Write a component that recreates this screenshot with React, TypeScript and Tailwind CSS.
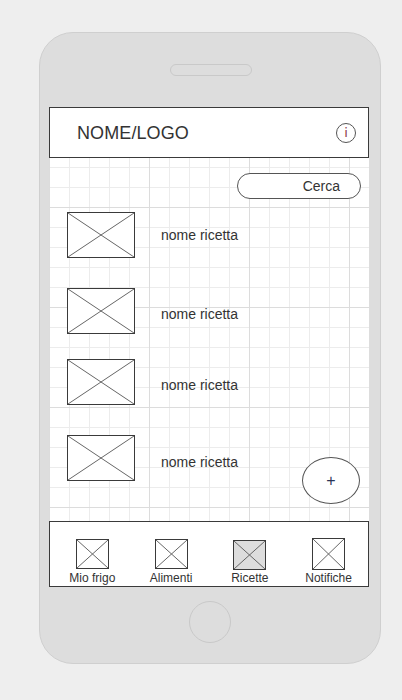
import React from 'react';

const recipes = [
  { id: 1, name: 'nome ricetta', gap: 'mt-[13px]', pad: 'pt-0' },
  { id: 2, name: 'nome ricetta', gap: 'mt-[30px]', pad: 'pt-[7px]' },
  { id: 3, name: 'nome ricetta', gap: 'mt-[25px]', pad: 'pt-[6px]' },
  { id: 4, name: 'nome ricetta', gap: 'mt-[30px]', pad: 'pt-[8px]' },
];

const tabs = [
  { id: 'frigo', label: 'Mio frigo', active: false, big: false },
  { id: 'alimenti', label: 'Alimenti', active: false, big: false },
  { id: 'ricette', label: 'Ricette', active: true, big: false },
  { id: 'notifiche', label: 'Notifiche', active: false, big: true },
];

// placeholder box with a cross, like in wireframes
const Placeholder: React.FC<{ className?: string; fill?: string }> = ({ className, fill }) => (
  <div className={`border border-[#3a3a3a] ${className ?? ''}`} style={fill ? { backgroundColor: fill } : undefined}>
    <svg className="w-full h-full block" viewBox="0 0 100 100" preserveAspectRatio="none">
      <line x1="0" y1="0" x2="100" y2="100" stroke="#666" strokeWidth="1" vectorEffect="non-scaling-stroke" />
      <line x1="100" y1="0" x2="0" y2="100" stroke="#666" strokeWidth="1" vectorEffect="non-scaling-stroke" />
    </svg>
  </div>
);

const App: React.FC = () => {
  return (
    <div className="min-h-[700px] w-[402px] bg-[#eeeeee] pt-[32px] font-['Liberation_Sans',Arial,sans-serif] text-[#333]">
      {/* Phone body */}
      <div className="ml-[39px] w-[342px] h-[632px] rounded-[34px] border border-[#cfcfcf] bg-[#dddddd] flex flex-col">
        {/* Speaker */}
        <div className="mt-[31px] ml-[130px] w-[82px] h-[12px] rounded-full border border-[#c9c9c9] bg-[#dddddd]" />

        {/* Screen */}
        <div className="mt-[31px] ml-[9px] w-[320px] flex flex-col">
          {/* Header */}
          <div className="h-[51px] border border-[#3a3a3a] bg-white flex items-center justify-between pl-[27px] pr-[12px]">
            <span className="text-[18px] text-[#333] tracking-[0.1px] pt-[2px]">NOME/LOGO</span>
            <div className="w-[20px] h-[20px] rounded-full border border-[#555] flex items-center justify-center">
              <span className="text-[13px] leading-none text-[#8b3a4a] font-['DejaVu_Sans',sans-serif]">i</span>
            </div>
          </div>

          {/* Content */}
          <div className="relative h-[363px] bg-white bg-[linear-gradient(to_right,#dcdcdc_1px,transparent_1px),linear-gradient(to_bottom,#dcdcdc_1px,transparent_1px),linear-gradient(to_right,#ececec_1px,transparent_1px),linear-gradient(to_bottom,#ececec_1px,transparent_1px)] bg-[size:100px_100px,100px_100px,20px_20px,20px_20px] bg-[position:0_49px,0_49px,0_9px,0_9px]">
            <div className="flex justify-end pt-[15px] pr-[8px]">
              <button className="w-[124px] h-[26px] rounded-full border border-[#555] bg-white flex items-center justify-end pr-[20px] text-[14px] text-[#333]">
                Cerca
              </button>
            </div>

            <div className="flex flex-col pl-[18px]">
              {recipes.map(r => (
                <div key={r.id} className={`flex items-center ${r.gap}`}>
                  <Placeholder className="w-[68px] h-[46px] bg-white" />
                  <span className={`ml-[26px] text-[14px] text-[#333] ${r.pad}`}>{r.name}</span>
                </div>
              ))}
            </div>

            {/* Add button */}
            <button className="absolute right-[9px] bottom-[17px] w-[58px] h-[47px] rounded-[50%] border border-[#555] bg-white flex items-center justify-center text-[16px] text-[#2b3557]">
              +
            </button>
          </div>

          {/* Bottom nav */}
          <div className="h-[66px] border border-[#3a3a3a] bg-white grid grid-cols-4 pl-[3px]">
            {tabs.map(t => (
              <div key={t.id} className="flex flex-col items-center pt-[17px]">
                {t.big ? (
                  <Placeholder className="w-[33px] h-[32px] -mt-[1px]" />
                ) : (
                  <Placeholder className={`w-[33px] h-[30px] ${t.active ? 'mt-[1px] -mb-[1px]' : ''}`} fill={t.active ? '#dddddd' : undefined} />
                )}
                <span className={`text-[12px] leading-[14px] text-[#333] ${t.big ? 'mt-[1px]' : 'mt-[2px]'}`}>{t.label}</span>
              </div>
            ))}
          </div>
        </div>

        {/* Home button */}
        <div className="mt-[14px] ml-[149px] w-[42px] h-[42px] rounded-full border border-[#c9c9c9] bg-[#dddddd]" />
      </div>
    </div>
  );
};

export default App;
